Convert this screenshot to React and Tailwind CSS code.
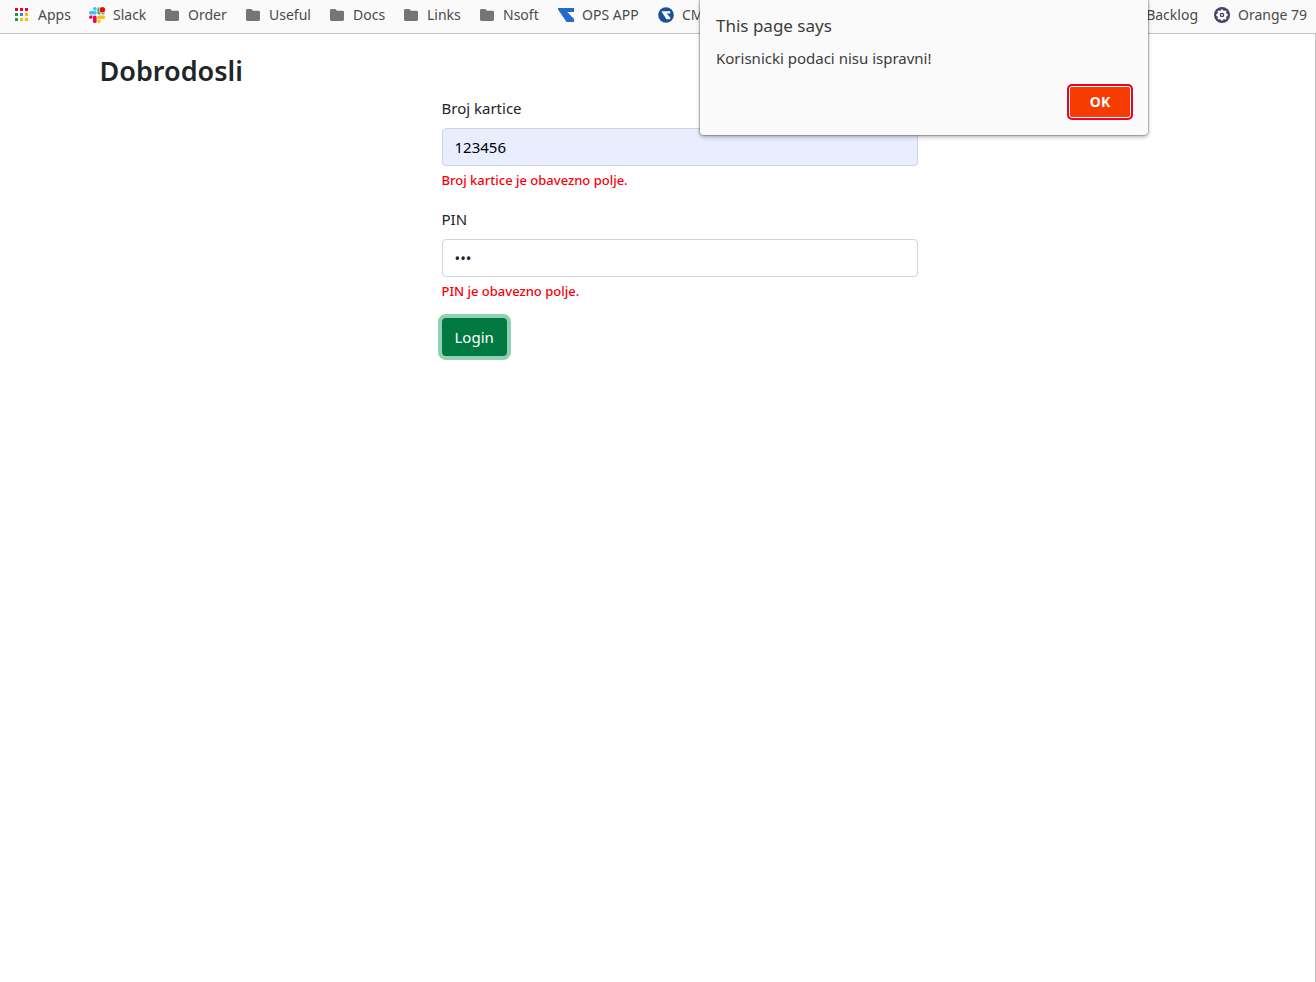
import React from 'react';

function AppsIcon() {
  const colors = ['#f0002c', '#f0002c', '#f0002c', '#12a150', '#3f7df0', '#fbbc05', '#12a150', '#fbbc05', '#fbbc05'];
  return (
    <svg className="size-4 shrink-0" viewBox="0 0 16 16" aria-hidden="true">
      {colors.map((c, i) => (
        <rect key={i} x={1 + (i % 3) * 5} y={1 + Math.floor(i / 3) * 5} width="3" height="3" fill={c} />
      ))}
    </svg>
  );
}

function SlackIcon() {
  return (
    <svg className="size-4 shrink-0" viewBox="0 0 16 16" aria-hidden="true">
      <g fill="#36c5f0">
        <rect x="0" y="4" width="7.6" height="3.6" rx="1.6" />
        <path d="M4 1.8a1.8 1.8 0 0 1 3.6 0v1.7H5.8A1.7 1.7 0 0 1 4 1.8z" />
      </g>
      <g fill="#2eb67d">
        <rect x="8.4" y="0.3" width="3.4" height="7.3" rx="1.6" />
        <path d="M12.6 5.9a1.6 1.6 0 1 1 1.6 1.6h-1.6z" />
      </g>
      <g fill="#fcc003">
        <rect x="8.4" y="8.4" width="7.6" height="3.6" rx="1.6" />
        <path d="M8.4 12.6h1.8a1.7 1.7 0 1 1-1.8 1.7z" />
      </g>
      <g fill="#f0005c">
        <rect x="4" y="8.4" width="3.6" height="7.6" rx="1.6" />
        <path d="M3.4 8.4v1.8a1.7 1.7 0 1 1-1.7-1.8z" />
      </g>
      <circle cx="13.4" cy="2.8" r="3.4" fill="#fafafa" />
      <circle cx="13.4" cy="2.8" r="2.8" fill="#ff0000" />
    </svg>
  );
}

function FolderIcon() {
  return (
    <svg className="size-4 shrink-0" viewBox="0 0 16 16" aria-hidden="true">
      <path d="M2.4 2H6.4L8 3.7h5.6A1.4 1.4 0 0 1 15 5.1v7.5A1.4 1.4 0 0 1 13.6 14H2.4A1.4 1.4 0 0 1 1 12.6V3.4A1.4 1.4 0 0 1 2.4 2z" fill="#757575" />
    </svg>
  );
}

function OpsIcon() {
  return (
    <svg className="size-4 shrink-0" viewBox="0 0 16 16" aria-hidden="true">
      <path d="M0 1h16v4H9.2L16 12v3H8.6L0 2.4z" fill="#2469cc" />
    </svg>
  );
}

function CmsIcon() {
  return (
    <svg className="size-4 shrink-0" viewBox="0 0 16 16" aria-hidden="true">
      <circle cx="8" cy="8" r="7.8" fill="#1c4f9c" />
      <path d="M3.4 4.2h8.8v2.2H8.6l3.6 4v1.8H8.4z" fill="#fff" />
    </svg>
  );
}

function GearBadgeIcon() {
  return (
    <svg className="size-4 shrink-0" viewBox="0 0 16 16" aria-hidden="true">
      <circle cx="8" cy="8" r="8" fill="#454270" />
      <g fill="#fff">
        <circle cx="8" cy="8" r="4.6" />
        {[0, 45, 90, 135].map((a) => (
          <rect key={a} x="6.8" y="2.4" width="2.4" height="11.2" rx="0.5" transform={`rotate(${a} 8 8)`} />
        ))}
      </g>
      <circle cx="8" cy="8" r="2.3" fill="#454270" />
      <circle cx="8" cy="8" r="0.9" fill="#fff" />
    </svg>
  );
}

const bookmarks = [
  { label: 'Apps', Icon: AppsIcon, width: 'w-[75px]' },
  { label: 'Slack', Icon: SlackIcon, width: 'w-[75px]' },
  { label: 'Order', Icon: FolderIcon, width: 'w-[81px]' },
  { label: 'Useful', Icon: FolderIcon, width: 'w-[84px]' },
  { label: 'Docs', Icon: FolderIcon, width: 'w-[74px]' },
  { label: 'Links', Icon: FolderIcon, width: 'w-[76px]' },
  { label: 'Nsoft', Icon: FolderIcon, width: 'w-[79px]' },
  { label: 'OPS APP', Icon: OpsIcon, width: 'w-[100px]' },
  { label: 'CMS', Icon: CmsIcon, width: 'w-[76px]' },
];

function Bookmark({ label, Icon, width = '' }) {
  return (
    <a href="#" className={`flex shrink-0 items-center gap-2 whitespace-nowrap ${width}`}>
      {Icon && <Icon />}
      <span>{label}</span>
    </a>
  );
}

function BookmarksBar() {
  return (
    <nav aria-label="Bookmarks" className="flex h-[34px] items-center overflow-hidden border-b border-[#c4c4c4] bg-[#fafafa] pr-[7px] pb-1 pl-[14px] text-sm text-[#4a4a4a]">
      {bookmarks.map((b) => (
        <Bookmark key={b.label} {...b} />
      ))}
      <div className="ml-auto flex items-center gap-4">
        <Bookmark label="Backlog" />
        <Bookmark label="Orange 79" Icon={GearBadgeIcon} width="w-[95px]" />
      </div>
    </nav>
  );
}

function Field({ id, label, type, defaultValue, error, tone }) {
  return (
    <div className="mb-4">
      <label htmlFor={id} className="mb-2 block">{label}</label>
      <input
        id={id}
        type={type}
        defaultValue={defaultValue}
        className={`block h-[38px] w-full rounded border border-[#ced4da] px-3 pb-px outline-none ${tone}`}
      />
      <p className="mt-1 text-[13px] leading-[21px] font-medium text-[#f8000c]">{error}</p>
    </div>
  );
}

function AlertDialog() {
  return (
    <div
      role="alertdialog"
      aria-labelledby="alert-title"
      aria-describedby="alert-text"
      className="absolute top-0 right-[168px] w-[448px] rounded-b bg-[#fafafa] px-4 pt-[14px] pb-[15px] text-[#3c3c3c] shadow-[0_0_1px_1px_rgba(0,0,0,0.22),0_2px_4px_rgba(0,0,0,0.3)]"
    >
      <h2 id="alert-title" className="text-[17px] leading-6">This page says</h2>
      <p id="alert-text" className="mt-2 text-[15px] leading-6">Korisnicki podaci nisu ispravni!</p>
      <div className="mt-[14px] flex justify-end">
        <button type="button" className="-mr-px h-9 w-[66px] rounded-[5px] border-2 border-[#f0002c] bg-[#f63c00] text-sm font-bold text-white shadow-[inset_0_0_0_1px_#fff]">
          OK
        </button>
      </div>
    </div>
  );
}

export default function App() {
  return (
    <div className="relative flex min-h-screen flex-col bg-white font-['Noto_Sans',sans-serif] text-[15px] leading-6 text-[#212529]">
      <BookmarksBar />
      <main className="grow border-r border-[#c4c4c4]">
        <div className="mx-auto max-w-[1140px] px-3 pt-5">
          <h1 className="mb-2 text-[27px] leading-[34px] font-semibold">Dobrodosli</h1>
          <form className="ml-[342px] max-w-[476px]" onSubmit={(e) => e.preventDefault()}>
            <Field id="card" label="Broj kartice" type="text" defaultValue="123456" error="Broj kartice je obavezno polje." tone="bg-[#e8eefe] text-black" />
            <Field id="pin" label="PIN" type="password" defaultValue="123" error="PIN je obavezno polje." tone="bg-white" />
            <button type="submit" className="h-[38px] rounded bg-[#007940] px-[13px] text-white shadow-[0_0_0_4px_#90d1b3]">
              Login
            </button>
          </form>
        </div>
      </main>
      <AlertDialog />
    </div>
  );
}
